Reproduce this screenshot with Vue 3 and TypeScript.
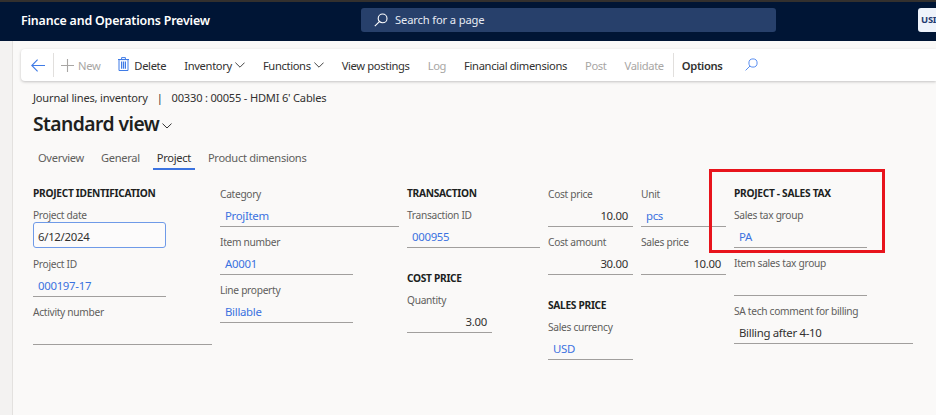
<template>
  <div class="page">
    <header class="topbar">
      <span class="app-name">Finance and Operations Preview</span>
      <div class="search">
        <svg class="search-icon" width="14" height="14" viewBox="0 0 14 14" fill="none" stroke="#fff" stroke-width="1.1">
          <circle cx="8.6" cy="5.4" r="4.4" />
          <path d="M5.4 8.6 0.8 13.2" />
        </svg>
        <span>Search for a page</span>
      </div>
      <div class="user">USI</div>
    </header>

    <div class="body">
      <div class="rail"></div>
      <main class="content">
        <nav class="toolbar">
          <svg class="back" width="14" height="13" viewBox="0 0 14 13" fill="none" stroke="#3f7be6" stroke-width="1.1">
            <path d="M6.6 0.6 0.8 6.5l5.8 5.9M0.8 6.5H14" />
          </svg>
          <span class="sep sep-first"></span>
          <span class="btn off new">
            <svg width="13" height="13" viewBox="0 0 13 13" stroke="#a8a6a4" stroke-width="1.1">
              <path d="M6.5 0v13M0 6.5h13" />
            </svg>
            New
          </span>
          <span class="btn trash">
            <svg width="11" height="14" viewBox="0 0 11 14" fill="none" stroke="#3f7be6" stroke-width="1">
              <path d="M0 2.5h11M3.6 2.3V.6h3.8v1.7M1 2.6h9v10.9H1z" />
              <path d="M3.6 4.4v7.4M5.5 4.4v7.4M7.4 4.4v7.4" stroke-width="1.2" />
            </svg>
            Delete
          </span>
          <span v-for="item in toolbarItems" :key="item.label" class="btn" :class="{ off: item.off }">
            {{ item.label }}
            <svg v-if="item.menu" class="chev" width="10" height="6" viewBox="0 0 10 6" fill="none" stroke="#444" stroke-width="1">
              <path d="M0.4 0.6 5 5.2 9.6 0.6" />
            </svg>
          </span>
          <span class="sep sep-last"></span>
          <span class="btn options">Options</span>
          <svg class="find" width="13" height="13" viewBox="0 0 13 13" fill="none" stroke="#5b8ff0" stroke-width="1">
            <circle cx="8" cy="5" r="4.1" />
            <path d="M5 8 0.6 12.4" />
          </svg>
        </nav>

        <div class="crumb">
          <span>Journal lines, inventory</span>
          <span class="bar">|</span>
          <span>00330 : 00055 - HDMI 6' Cables</span>
        </div>
        <div class="title">
          Standard view
          <svg width="10" height="6" viewBox="0 0 10 6" fill="none" stroke="#333" stroke-width="1">
            <path d="M0.5 0.6 5 5 9.5 0.6" />
          </svg>
        </div>

        <div class="tabs">
          <span v-for="tab in tabs" :key="tab" class="tab" :class="{ active: tab === 'Project' }">{{ tab }}</span>
        </div>

        <section class="form">
          <div v-for="(col, i) in columns" :key="i" class="col" :class="{ plain: !col[0].heading }">
            <template v-for="row in col" :key="row.label">
              <h3 v-if="row.heading" class="heading" :class="row.cls">{{ row.label }}</h3>
              <div v-else class="field" :class="row.cls">
                <label>{{ row.label }}</label>
                <div v-if="row.input" class="input">{{ row.value }}</div>
                <div v-else class="value" :class="{ link: row.link, num: row.num }">{{ row.value }}</div>
              </div>
            </template>
            <div v-if="i === 5" class="redbox"></div>
          </div>
        </section>
      </main>
    </div>
  </div>
</template>

<script setup lang="ts">
interface Row {
  label: string
  value?: string
  heading?: boolean
  link?: boolean
  num?: boolean
  input?: boolean
  cls?: string
}

const toolbarItems = [
  { label: 'Inventory', menu: true },
  { label: 'Functions', menu: true },
  { label: 'View postings' },
  { label: 'Log', off: true },
  { label: 'Financial dimensions' },
  { label: 'Post', off: true },
  { label: 'Validate', off: true },
]

const tabs = ['Overview', 'General', 'Project', 'Product dimensions']

const columns: Row[][] = [
  [
    { label: 'PROJECT IDENTIFICATION', heading: true },
    { label: 'Project date', value: '6/12/2024', input: true, cls: 'short date' },
    { label: 'Project ID', value: '000197-17', link: true, cls: 'short' },
    { label: 'Activity number', value: '' },
  ],
  [
    { label: 'Category', value: 'ProjItem', link: true },
    { label: 'Item number', value: 'A0001', link: true, cls: 'short' },
    { label: 'Line property', value: 'Billable', link: true, cls: 'short' },
  ],
  [
    { label: 'TRANSACTION', heading: true },
    { label: 'Transaction ID', value: '000955', link: true },
    { label: 'COST PRICE', heading: true, cls: 'lower' },
    { label: 'Quantity', value: '3.00', num: true, cls: 'tiny' },
  ],
  [
    { label: 'Cost price', value: '10.00', num: true },
    { label: 'Cost amount', value: '30.00', num: true },
    { label: 'SALES PRICE', heading: true, cls: 'lower' },
    { label: 'Sales currency', value: 'USD', link: true },
  ],
  [
    { label: 'Unit', value: 'pcs', link: true },
    { label: 'Sales price', value: '10.00', num: true },
  ],
  [
    { label: 'PROJECT - SALES TAX', heading: true },
    { label: 'Sales tax group', value: 'PA', link: true, cls: 'short' },
    { label: 'Item sales tax group', value: '', cls: 'short' },
    { label: 'SA tech comment for billing', value: 'Billing after 4-10' },
  ],
]
</script>

<style>
body {
  margin: 0;
  background: #faf9f8;
}
</style>

<style scoped>
.page {
  width: 936px;
  height: 415px;
  overflow: hidden;
  display: flex;
  flex-direction: column;
  font-family: "Noto Sans", "Open Sans", sans-serif;
  color: #323130;
  background: #faf9f8;
}

.topbar {
  height: 39px;
  flex: none;
  border-top: 2px solid #33302e;
  background: #001535;
  display: flex;
  align-items: center;
  padding: 0 0 0 21px;
}

.app-name {
  flex: none;
  width: 340px;
  color: #fff;
  font-size: 12.4px;
  font-weight: 600;
  letter-spacing: -0.17px;
  margin-top: -3px;
}

.search {
  flex: none;
  width: 415px;
  height: 24px;
  margin-top: -4px;
  box-sizing: border-box;
  background: #27406b;
  border-radius: 3px;
  display: flex;
  align-items: center;
  gap: 7px;
  padding-left: 13px;
  color: #e6ebf3;
  font-size: 11.2px;
  letter-spacing: -0.15px;
}

.user {
  flex: none;
  width: 30px;
  height: 24px;
  margin: -4px 0 0 142px;
  box-sizing: border-box;
  padding: 5px 0 0 3px;
  background: #eef3fb;
  border-radius: 3px;
  color: #1f3b70;
  font-size: 9.4px;
  font-weight: 700;
  letter-spacing: -0.2px;
}

.body {
  flex: 1;
  display: flex;
}

.rail {
  width: 12px;
  flex: none;
  background: #f3f2f1;
  border-right: 1px solid #e3e1df;
}

.content {
  flex: 1;
  min-width: 0;
}

.toolbar {
  height: 32px;
  margin: 8px 0 0 8px;
  background: #fff;
  border-radius: 4px 0 0 4px;
  box-shadow: 0 1px 3px rgba(0, 0, 0, 0.22);
  display: flex;
  align-items: center;
  padding-left: 10px;
  font-size: 11.2px;
  letter-spacing: -0.35px;
  white-space: nowrap;
}

.back {
  flex: none;
}

.sep {
  width: 1px;
  height: 24px;
  background: #e1dfdd;
  flex: none;
}

.sep-first {
  margin: 0 7px 0 8px;
}

.sep-last {
  margin: 0 8px 0 -9px;
}

.btn {
  display: inline-flex;
  align-items: center;
  margin-right: 18px;
}

.btn.off {
  color: #a8a6a4;
}

.new svg {
  margin-right: 4px;
}

.trash svg {
  margin-right: 5px;
  margin-top: -3px;
}

.chev {
  margin-left: 3px;
}

.options {
  font-weight: 600;
  margin-right: 23px;
}

.find {
  flex: none;
  margin-top: -2px;
}

.crumb {
  margin: 9px 0 0 20px;
  font-size: 11.1px;
  letter-spacing: -0.2px;
  line-height: 16px;
  display: flex;
}

.bar {
  margin: 0 9px;
}

.title {
  margin: 5px 0 0 20px;
  font-size: 19.3px;
  font-weight: 600;
  letter-spacing: -0.55px;
  line-height: 26px;
  display: flex;
  align-items: center;
  gap: 3px;
  color: #201f1e;
}

.title svg {
  margin-top: 4px;
}

.tabs {
  margin: 12px 0 0 21px;
  display: flex;
  gap: 9px;
  font-size: 11.1px;
  letter-spacing: -0.3px;
  color: #605e5c;
}

.tab {
  padding: 0 4px 2px;
  line-height: 17px;
  border-bottom: 2px solid transparent;
}

.tab.active {
  color: #323130;
  border-bottom-color: #3b73e0;
}

.form {
  margin: 14px 0 0 20px;
  display: grid;
  grid-template-columns: 179px 179px 133px 85px 85px 179px;
  column-gap: 8px;
  align-items: start;
}

.col {
  position: relative;
  min-width: 0;
}

.col.plain {
  padding-top: 2px;
}

.heading {
  margin: 0 0 5px;
  height: 18px;
  line-height: 18px;
  font-size: 10.2px;
  font-weight: 700;
  letter-spacing: -0.3px;
  color: #201f1e;
  white-space: nowrap;
}

.heading.lower {
  margin-top: 20px;
}

.field {
  height: 42px;
  margin-bottom: 6px;
}

.field.date {
  margin-bottom: 7px;
}

.field.short {
  width: 133px;
}

.field.tiny {
  width: 85px;
}

.field label {
  display: block;
  height: 16px;
  line-height: 16px;
  font-size: 10.2px;
  letter-spacing: -0.3px;
  color: #605e5c;
  white-space: nowrap;
}

.value {
  height: 25px;
  box-sizing: border-box;
  line-height: 27px;
  padding: 0 5px;
  border-bottom: 1px solid #a19f9d;
  font-size: 11.4px;
  letter-spacing: -0.3px;
  white-space: nowrap;
}

.value.link {
  color: #3a72e0;
}

.value.num {
  text-align: right;
}

.input {
  height: 26px;
  box-sizing: border-box;
  margin-top: -1px;
  line-height: 27px;
  padding: 0 4px;
  background: #fcfbfb;
  border: 1px solid #6f9ae8;
  border-radius: 3px;
  font-size: 11.4px;
  letter-spacing: -0.3px;
}

.redbox {
  position: absolute;
  left: -25px;
  top: -15px;
  width: 176px;
  height: 84px;
  box-sizing: border-box;
  border: 3px solid #e8141c;
}
</style>
